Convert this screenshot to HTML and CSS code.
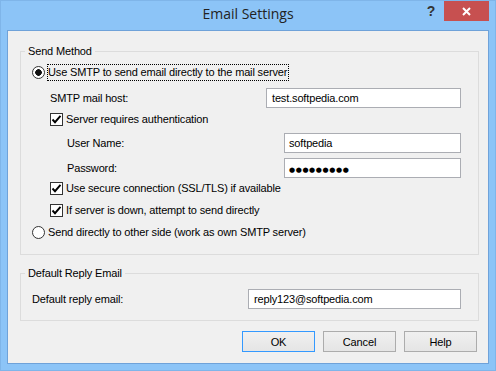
FILE: index.html
```html
<!DOCTYPE html>
<html>
<head>
  <meta charset="utf-8">
  <title>Email Settings</title>
  <link rel="stylesheet" href="styles.css">
</head>
<body>
  <div class="window">
    <header class="titlebar">
      <h1>Email Settings</h1>
      <div class="controls">
        <span class="help-btn">?</span>
        <span class="close-btn">
          <svg width="45" height="20" viewBox="0 0 45 20">
            <path d="M19 7 L26 14 M26 7 L19 14" stroke="#fff" stroke-width="2" fill="none"/>
          </svg>
        </span>
      </div>
    </header>

    <main class="client">
      <section class="group group-send">
        <div class="group-title">Send Method</div>

        <div class="row row-option row-first">
          <span class="radio checked"></span>
          <span class="focus">Use SMTP to send email directly to the mail server</span>
        </div>

        <div class="row row-field row-host">
          <span class="label">SMTP mail host:</span>
          <span class="textbox box-host">test.softpedia.com</span>
        </div>

        <div class="row row-check row-auth">
          <span class="check"><svg width="11" height="11" viewBox="0 0 11 11"><path d="M1.5 5.5 L4 8.2 L9.5 1.8" stroke="#000" stroke-width="1.9" fill="none"/></svg></span>
          <span class="text">Server requires authentication</span>
        </div>

        <div class="row row-field row-user">
          <span class="label">User Name:</span>
          <span class="textbox box-user">softpedia</span>
        </div>

        <div class="row row-field row-pass">
          <span class="label">Password:</span>
          <span class="textbox box-user"><span class="dots">●●●●●●●●●</span></span>
        </div>

        <div class="row row-check row-ssl">
          <span class="check"><svg width="11" height="11" viewBox="0 0 11 11"><path d="M1.5 5.5 L4 8.2 L9.5 1.8" stroke="#000" stroke-width="1.9" fill="none"/></svg></span>
          <span class="text">Use secure connection (SSL/TLS) if available</span>
        </div>

        <div class="row row-check row-down">
          <span class="check"><svg width="11" height="11" viewBox="0 0 11 11"><path d="M1.5 5.5 L4 8.2 L9.5 1.8" stroke="#000" stroke-width="1.9" fill="none"/></svg></span>
          <span class="text">If server is down, attempt to send directly</span>
        </div>

        <div class="row row-option row-direct">
          <span class="radio"></span>
          <span class="text">Send directly to other side (work as own SMTP server)</span>
        </div>
      </section>

      <section class="group group-reply">
        <div class="group-title">Default Reply Email</div>
        <div class="row row-field row-reply">
          <span class="label">Default reply email:</span>
          <span class="textbox box-reply">reply123@softpedia.com</span>
        </div>
      </section>

      <div class="buttons">
        <button class="btn btn-default">OK</button>
        <button class="btn">Cancel</button>
        <button class="btn">Help</button>
      </div>
    </main>
  </div>
</body>
</html>
```

FILE: styles.css
```css
html, body {
  margin: 0;
  padding: 0;
}

body {
  background: #8cc4f7;
  color: #000;
  font-family: 'Liberation Sans', Arial, sans-serif;
  font-size: 11px;
  letter-spacing: -0.15px;
}

* {
  box-sizing: border-box;
}

.window {
  background: #8cc4f7;
  border: 1px solid #7fb5e9;
  display: flex;
  flex-direction: column;
  height: 371px;
  width: 496px;
}

/* title bar */

.titlebar {
  display: grid;
  grid-template-columns: 1fr auto 1fr;
  height: 29px;
}

.titlebar h1 {
  color: #222;
  font-family: 'Open Sans', sans-serif;
  font-size: 14px;
  font-weight: 400;
  grid-column: 2;
  letter-spacing: 0;
  line-height: 20px;
  margin: 3px 0 0;
}

.controls {
  align-items: flex-start;
  display: flex;
  grid-column: 3;
  justify-self: end;
  margin-right: 6px;
}

.help-btn {
  color: #333;
  font-size: 14px;
  font-weight: 700;
  line-height: 20px;
  text-align: center;
  width: 26px;
}

.close-btn {
  background: #c75050;
  display: block;
  height: 20px;
  width: 45px;
}

.close-btn svg {
  display: block;
}

/* client area */

.client {
  background: #f0f0f0;
  border: 1px solid #6fa2d9;
  display: flex;
  flex: 1;
  flex-direction: column;
  margin: 0 6px 6px;
  padding: 0 9px 0 12px;
}

.group {
  border: 1px solid #dcdcdc;
  display: flex;
  flex-direction: column;
}

.group-send {
  margin-top: 20px;
  padding-bottom: 14px;
}

.group-reply {
  margin-top: 18px;
  padding-bottom: 11px;
}

.group-title {
  align-self: flex-start;
  background: #f0f0f0;
  line-height: 13px;
  margin: -7px 0 0 4px;
  padding: 0 3px;
}

.row {
  align-items: center;
  display: flex;
}

.row-option {
  height: 16px;
  padding-left: 11px;
}

.row-check {
  height: 16px;
  padding-left: 29px;
}

.row-field {
  height: 20px;
  padding-left: 29px;
}

.row-first { height: 17px; margin-top: 6px; }
.row-host { margin-top: 7px; }
.row-auth { margin-top: 3px; }
.row-user { margin-top: 6px; padding-left: 46px; }
.row-pass { margin-top: 5px; padding-left: 46px; }
.row-ssl { margin-top: 2px; }
.row-down { margin-top: 6px; }
.row-direct { margin-top: 6px; }
.row-reply { margin-top: 9px; padding-left: 11px; }

.radio {
  background: #fff;
  border: 1px solid #333;
  border-radius: 50%;
  flex: none;
  height: 13px;
  width: 13px;
}

.radio.checked {
  background: radial-gradient(circle, #111 0 3px, #fff 3.6px);
}

.check {
  background: #fff;
  border: 1px solid #333;
  flex: none;
  height: 13px;
  width: 13px;
}

.check svg {
  display: block;
}

.text {
  margin-left: 3px;
}

.focus {
  border: 1px dotted #000;
  line-height: 15px;
  margin-left: 2px;
  padding-right: 1px;
}

.textbox {
  background: #fff;
  border: 1px solid #abadb3;
  height: 20px;
  line-height: 18px;
  margin: 0 17px 0 auto;
  padding: 0 5px;
}

.box-host { width: 195px; }
.box-user { width: 177px; padding-left: 4px; }
.box-reply { width: 213px; }

.dots {
  font-family: 'DejaVu Sans', sans-serif;
  font-size: 7px;
  letter-spacing: 0.6px;
}

/* buttons */

.buttons {
  display: flex;
  gap: 8px;
  justify-content: flex-end;
  margin: 10px 2px 0 0;
}

.btn {
  background: linear-gradient(#f0f0f0, #e5e5e5);
  border: 1px solid #acacac;
  color: #000;
  font-family: inherit;
  font-size: 11px;
  height: 21px;
  letter-spacing: inherit;
  padding: 0;
  width: 73px;
}

.btn-default {
  border-color: #3399ff;
}
```
